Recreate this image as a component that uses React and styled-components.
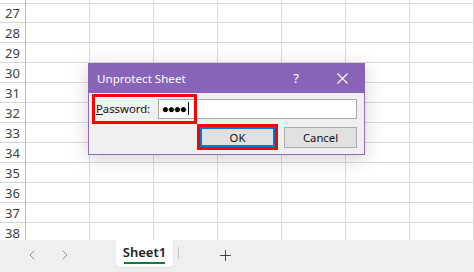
import React from 'react'
import styled, { createGlobalStyle } from 'styled-components'
import { ChevronLeft, ChevronRight, Plus } from 'lucide-react'

const Global = createGlobalStyle`
  html, body { margin: 0; padding: 0; }
  body {
    width: 474px;
    height: 272px;
    overflow: hidden;
    font-family: "Noto Sans", "Open Sans", sans-serif;
    background: #ffffff;
  }
`

const Page = styled.div`
  position: relative;
  width: 474px;
  height: 272px;
  display: flex;
  flex-direction: column;
  overflow: hidden;
`

const Sheet = styled.div`
  height: 240px;
  display: flex;
  flex-direction: column;
`

const Row = styled.div`
  display: grid;
  grid-template-columns: 26px repeat(7, 64px);
  height: ${p => p.h}px;
  flex-shrink: 0;
`

const RowHead = styled.div`
  box-sizing: border-box;
  border-right: 1px solid #bcbcbc;
  border-bottom: ${p => (p.last ? 'none' : '1px solid #d4d4d4')};
  display: flex;
  align-items: flex-start;
  justify-content: center;
  font-size: 13px;
  line-height: 14px;
  color: #404040;
  padding-top: 3px;
`

const Cell = styled.div`
  box-sizing: border-box;
  border-right: 1px solid #dadada;
  border-bottom: ${p => (p.last ? 'none' : '1px solid #dadada')};
`

const TabBar = styled.div`
  height: 32px;
  background: #efefef;
  display: flex;
  align-items: flex-start;
`

const NavBtn = styled.div`
  width: 33px;
  height: 30px;
  display: flex;
  align-items: center;
  justify-content: center;
  color: #8a8a8a;
`

const NavGroup = styled.div`
  display: flex;
  padding-left: 15px;
  width: 101px;
`

const SheetTab = styled.div`
  width: 57px;
  height: 27px;
  background: #ffffff;
  border-radius: 0 0 4px 4px;
  box-shadow: 0 1px 1px rgba(0,0,0,0.08);
  display: flex;
  flex-direction: column;
  align-items: center;
  justify-content: flex-start;
  padding-top: 4px;
  box-sizing: border-box;
  font-size: 13px;
  line-height: 16px;
  font-weight: 600;
  color: #222;
`

const TabLine = styled.div`
  width: 41px;
  height: 2px;
  background: #107c41;
  margin-top: 2px;
`

const Sep = styled.div`
  width: 1px;
  height: 12px;
  background: #c4c4c4;
  margin: 7px 0 0 5px;
`

const AddBtn = styled.div`
  margin-left: 38px;
  height: 30px;
  display: flex;
  align-items: center;
  color: #333;
`

const Dialog = styled.div`
  position: absolute;
  left: 88px;
  top: 63px;
  width: 277px;
  height: 92px;
  box-sizing: border-box;
  border: 1px solid #8d6cc0;
  border-top: none;
  background: #f0f0f0;
  box-shadow: 0 4px 18px rgba(0,0,0,0.18);
  display: flex;
  flex-direction: column;
  font-size: 11.3px;
`

const TitleBar = styled.div`
  height: 30px;
  margin: 0 -1px;
  background: #8764b8;
  color: #ffffff;
  display: flex;
  align-items: center;
  padding-left: 9px;
`

const Title = styled.div`
  flex: 1;
  font-size: 11.6px;
`

const TitleBtn = styled.div`
  width: 46px;
  height: 30px;
  display: flex;
  align-items: center;
  justify-content: center;
  font-size: 13px;
`

const Body = styled.div`
  flex: 1;
  display: flex;
  flex-direction: column;
  padding: 0 7px 0 3px;
`

const FieldRow = styled.div`
  display: flex;
  align-items: center;
  height: 31px;
`

const LabelBox = styled.div`
  box-sizing: border-box;
  width: 105px;
  height: 30px;
  border: 3px solid #ff0000;
  display: flex;
  align-items: center;
  padding-left: 1px;
  color: #111;
  position: relative;
  z-index: 1;
`

const Input = styled.div`
  box-sizing: border-box;
  margin-left: -39px;
  width: 200px;
  height: 20px;
  background: #ffffff;
  border: 1px solid #a9a9a9;
  display: flex;
  align-items: center;
  padding-left: 3px;
  font-size: 12px;
  letter-spacing: -1.2px;
  color: #000;
`

const Caret = styled.span`
  display: inline-block;
  width: 1px;
  height: 13px;
  background: #000;
  margin-left: 2px;
`

const ButtonRow = styled.div`
  display: flex;
  align-items: center;
  padding-left: 105px;
  gap: 6px;
`

const RedFrame = styled.div`
  box-sizing: border-box;
  width: 81px;
  height: 26px;
  border: 3px solid #ff0000;
  display: flex;
  align-items: center;
  justify-content: center;
`

const Button = styled.div`
  box-sizing: border-box;
  width: ${p => (p.primary ? 75 : 73)}px;
  height: ${p => (p.primary ? 20 : 21)}px;
  background: #e1e1e1;
  border: ${p => (p.primary ? '2px solid #0078d7' : '1px solid #adadad')};
  display: flex;
  align-items: center;
  justify-content: center;
  color: #111;
`

const rows = [26, 27, 28, 29, 30, 31, 32, 33, 34, 35, 36, 37, 38]

export default function App() {
  return (
    <Page>
      <Global />
      <Sheet>
        {rows.map(n => {
          const last = n === 38
          return (
            <Row key={n} h={n === 26 ? 3 : last ? 17 : 20}>
              <RowHead last={last}>{n === 26 ? '' : n}</RowHead>
              {[0, 1, 2, 3, 4, 5, 6].map(c => (
                <Cell key={c} last={last} />
              ))}
            </Row>
          )
        })}
      </Sheet>
      <TabBar>
        <NavGroup>
          <NavBtn><ChevronLeft size={16} strokeWidth={1.4} /></NavBtn>
          <NavBtn><ChevronRight size={16} strokeWidth={1.4} /></NavBtn>
        </NavGroup>
        <SheetTab>
          Sheet1
          <TabLine />
        </SheetTab>
        <Sep />
        <AddBtn><Plus size={17} strokeWidth={1.3} /></AddBtn>
      </TabBar>

      <Dialog>
        <TitleBar>
          <Title>Unprotect Sheet</Title>
          <TitleBtn>?</TitleBtn>
          <TitleBtn>
            <svg width="11" height="11" viewBox="0 0 11 11">
              <path d="M0.5 0.5 L10.5 10.5 M10.5 0.5 L0.5 10.5" stroke="#fff" strokeWidth="1.1" />
            </svg>
          </TitleBtn>
        </TitleBar>
        <Body>
          <FieldRow>
            <LabelBox><span><u>P</u>assword:</span></LabelBox>
            <Input>●●●●<Caret /></Input>
          </FieldRow>
          <ButtonRow>
            <RedFrame><Button primary>OK</Button></RedFrame>
            <Button>Cancel</Button>
          </ButtonRow>
        </Body>
      </Dialog>
    </Page>
  )
}
